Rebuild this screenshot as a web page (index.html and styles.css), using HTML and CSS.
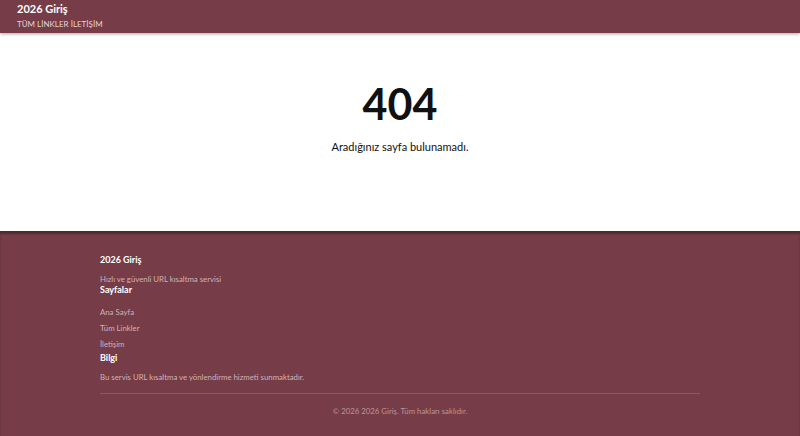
FILE: index.html
```html
<!DOCTYPE html>
<html lang="tr">
<head>
<meta charset="utf-8">
<title>404 - 2026 Giriş</title>
<link rel="stylesheet" href="styles.css">
</head>
<body>
<header class="site-header">
  <div class="brand">2026 Giriş</div>
  <nav class="nav"><a href="#">Tüm Linkler</a> <a href="#">İletişim</a></nav>
</header>
<main class="main">
  <h1 class="code">404</h1>
  <p class="msg">Aradığınız sayfa bulunamadı.</p>
</main>
<footer class="site-footer">
  <div class="container">
    <div class="col">
      <h3 class="f-title">2026 Giriş</h3>
      <p class="f-text">Hızlı ve güvenli URL kısaltma servisi</p>
    </div>
    <div class="col">
      <h3 class="f-title">Sayfalar</h3>
      <ul class="f-links">
        <li><a href="#">Ana Sayfa</a></li>
        <li><a href="#">Tüm Linkler</a></li>
        <li><a href="#">İletişim</a></li>
      </ul>
    </div>
    <div class="col">
      <h3 class="f-title">Bilgi</h3>
      <p class="f-text">Bu servis URL kısaltma ve yönlendirme hizmeti sunmaktadır.</p>
    </div>
    <div class="bottom">© 2026 2026 Giriş. Tüm hakları saklıdır.</div>
  </div>
</footer>
</body>
</html>
```
FILE: styles.css
```css
* { box-sizing: border-box; }
html, body { margin: 0; padding: 0; }
body {
  font-family: Lato, "Noto Sans", sans-serif;
  background: #ffffff;
  color: #111;
  width: 800px;
  height: 436px;
  overflow: hidden;
}
a { color: inherit; text-decoration: none; }
.site-header {
  background: #763d48;
  height: 33px;
  padding: 2px 17px 0;
  box-shadow: 0 1px 3px rgba(0,0,0,0.35);
  position: relative;
  z-index: 1;
}
.brand {
  color: #fff;
  font-weight: 700;
  font-size: 11px;
  line-height: 14px;
}
.nav {
  margin-top: 2px;
  color: #e4d2d6;
  font-size: 8px;
  text-transform: uppercase;
  line-height: 12px;
}
.main {
  height: 198px;
  display: flex;
  flex-direction: column;
  align-items: center;
  padding-top: 46px;
}
.code {
  margin: 0;
  font-size: 43px;
  line-height: 50px;
  font-weight: 700;
}
.msg {
  margin: 11px 0 0;
  font-size: 11px;
  line-height: 14px;
  color: #111;
}
.site-footer {
  background: #763d48;
  height: 205px;
  box-shadow: 0 2px 2px rgba(0,0,0,0.3) inset;
  border-top: 1px solid #4e2a31;
  padding-top: 22px;
}
.container {
  width: 600px;
  margin: 0 auto;
}
.f-title {
  margin: 0;
  color: #fff;
  font-size: 9px;
  font-weight: 700;
  line-height: 12px;
}
.f-text {
  margin: 8px 0 0;
  font-size: 7.8px;
  line-height: 10px;
  color: #cfb2b8;
}
.f-links {
  list-style: none;
  margin: 8px 0 0;
  padding: 0;
}
.f-links li {
  font-size: 7.8px;
  line-height: 16px;
  color: #cfb2b8;
}
.bottom {
  margin-top: 11px;
  border-top: 1px solid #8d5864;
  padding-top: 12px;
  text-align: center;
  font-size: 7.8px;
  line-height: 10px;
  color: #b8959c;
}
```
